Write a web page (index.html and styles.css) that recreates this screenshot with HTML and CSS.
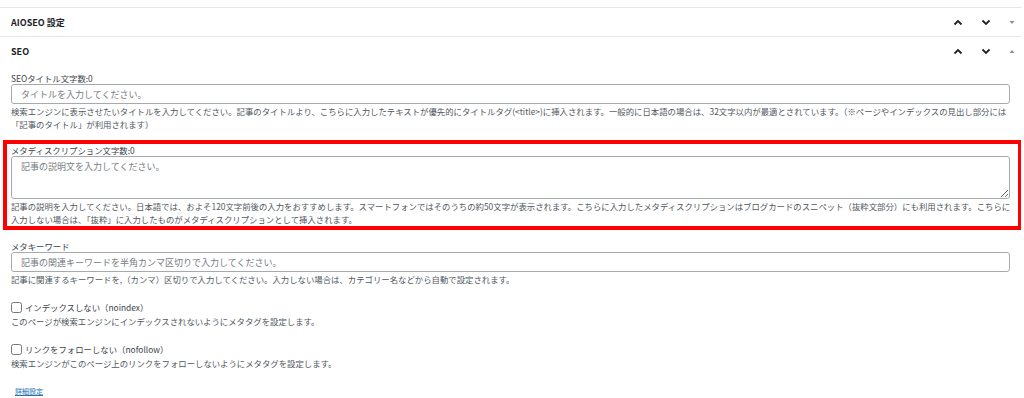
FILE: index.html
```html
<!DOCTYPE html>
<html lang="ja">
<head>
    <meta charset="UTF-8">
    <title>AIOSEO 設定</title>
    <link rel="stylesheet" href="styles.css">
</head>
<body>

<div class="postbox">
    <div class="postbox-header">
        <h2>AIOSEO 設定</h2>
        <div class="handle-actions">
            <svg class="chev" width="10" height="7" viewBox="0 0 10 7"><path d="M1.5 5.5 L5 2 L8.5 5.5"/></svg>
            <svg class="chev" width="10" height="7" viewBox="0 0 10 7"><path d="M1.5 1.5 L5 5 L8.5 1.5"/></svg>
            <svg class="tri" width="6" height="5" viewBox="0 0 6 5"><path d="M0.5 1 L5.5 1 L3 4 Z"/></svg>
        </div>
    </div>
</div>

<div class="postbox">
    <div class="postbox-header">
        <h2>SEO</h2>
        <div class="handle-actions">
            <svg class="chev" width="10" height="7" viewBox="0 0 10 7"><path d="M1.5 5.5 L5 2 L8.5 5.5"/></svg>
            <svg class="chev" width="10" height="7" viewBox="0 0 10 7"><path d="M1.5 1.5 L5 5 L8.5 1.5"/></svg>
            <svg class="tri" width="6" height="5" viewBox="0 0 6 5"><path d="M0.5 4 L5.5 4 L3 1 Z"/></svg>
        </div>
    </div>

    <div class="inside">
        <div class="field">
            <label for="seo_title">SEOタイトル文字数:0</label>
            <input type="text" id="seo_title" placeholder="タイトルを入力してください。">
            <p class="howto">検索エンジンに表示させたいタイトルを入力してください。記事のタイトルより、こちらに入力したテキストが優先的にタイトルタグ(&lt;title&gt;)に挿入されます。一般的に日本語の場合は、32文字以内が最適とされています。（※ページやインデックスの見出し部分には「記事のタイトル」が利用されます）</p>
        </div>

        <div class="field highlight">
            <label for="seo_desc">メタディスクリプション文字数:0</label>
            <textarea id="seo_desc" placeholder="記事の説明文を入力してください。"></textarea>
            <p class="howto">記事の説明を入力してください。日本語では、およそ120文字前後の入力をおすすめします。スマートフォンではそのうちの約50文字が表示されます。こちらに入力したメタディスクリプションはブログカードのスニペット（抜粋文部分）にも利用されます。こちらに入力しない場合は、「抜粋」に入力したものがメタディスクリプションとして挿入されます。</p>
        </div>

        <div class="field">
            <label for="seo_keywords">メタキーワード</label>
            <input type="text" id="seo_keywords" placeholder="記事の関連キーワードを半角カンマ区切りで入力してください。">
            <p class="howto">記事に関連するキーワードを,（カンマ）区切りで入力してください。入力しない場合は、カテゴリー名などから自動で設定されます。</p>
        </div>

        <div class="field check">
            <label class="check-label"><input type="checkbox"> インデックスしない（noindex）</label>
            <p class="howto">このページが検索エンジンにインデックスされないようにメタタグを設定します。</p>
        </div>

        <div class="field check">
            <label class="check-label"><input type="checkbox"> リンクをフォローしない（nofollow）</label>
            <p class="howto">検索エンジンがこのページ上のリンクをフォローしないようにメタタグを設定します。</p>
        </div>

        <a class="more" href="#">詳細設定</a>
    </div>
</div>

</body>
</html>
```

FILE: styles.css
```css
body {
    font-family: "Noto Sans CJK JP", "Noto Sans", sans-serif;
    background-color: #ffffff;
    color: #3c434a;
    margin: 0;
    padding-top: 7px;
    width: 1021px;
    font-size: 8.4px;
}
.postbox-header {
    display: flex;
    align-items: center;
    justify-content: space-between;
    height: 28px;
    border-top: 1px solid #e6e7e8;
}
.postbox-header h2 {
    margin: 0;
    padding-left: 11px;
    font-size: 9px;
    font-weight: bold;
    color: #1d2327;
}
.handle-actions {
    display: flex;
    align-items: center;
    padding-right: 6px;
}
.chev {
    fill: none;
    stroke: #1d2327;
    stroke-width: 1.8;
    margin-right: 18px;
}
.tri {
    fill: #8c8f94;
}
.inside {
    padding: 7px 11px 0 11px;
}
.field {
    margin-bottom: 9px;
}
label {
    display: block;
    line-height: 12px;
    color: #3c434a;
}
input[type="text"], textarea {
    display: block;
    width: 100%;
    box-sizing: border-box;
    margin: 0;
    height: 20px;
    padding: 0 9px;
    border: 1px solid #a7aaad;
    border-radius: 3px;
    font-family: inherit;
    font-size: 9px;
    color: #3c434a;
    background: #fff;
}
textarea {
    height: 43px;
    padding: 3px 9px;
    resize: vertical;
}
::placeholder {
    color: #787c82;
}
.howto {
    margin: 0;
    padding-top: 1px;
    line-height: 13px;
    color: #50575e;
}
.highlight {
    margin: 0 -12px 10px -8px;
    padding: 0 8px 0 4px;
    border: 4px solid #ff0000;
}
.highlight .howto {
    margin-right: -4px;
}
.field + .check {
    margin-top: 14px;
}
.check {
    margin-bottom: 14px;
}
.check-label {
    display: flex;
    align-items: center;
    line-height: 14px;
}
.check-label input {
    margin: 0 3px 0 0;
    width: 11px;
    height: 11px;
}
.more {
    display: inline-block;
    margin: 1px 0 0 4px;
    font-size: 7px;
    line-height: 10px;
    color: #2271b1;
}
```
